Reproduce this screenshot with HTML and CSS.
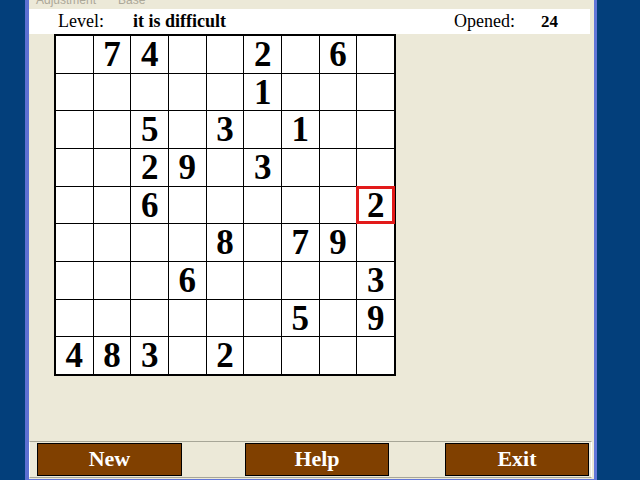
FILE: index.html
```html
<!DOCTYPE html>
<html lang="en">
<head>
    <meta charset="UTF-8">
    <title>Sudoku</title>
    <link rel="stylesheet" href="styles.css">
</head>
<body>
    <div class="window">
        <div class="frame-left"></div>
        <div class="main">
            <div class="menu"><span>Adjustment</span><span>Base</span></div>
            <div class="info">
                <span class="label">Level:</span>
                <span class="level">it is difficult</span>
                <span class="label opened">Opened:</span>
                <span class="count">24</span>
            </div>
            <div class="board">
                <div></div><div>7</div><div>4</div><div></div><div></div><div>2</div><div></div><div>6</div><div></div>
                <div></div><div></div><div></div><div></div><div></div><div>1</div><div></div><div></div><div></div>
                <div></div><div></div><div>5</div><div></div><div>3</div><div></div><div>1</div><div></div><div></div>
                <div></div><div></div><div>2</div><div>9</div><div></div><div>3</div><div></div><div></div><div></div>
                <div></div><div></div><div>6</div><div></div><div></div><div></div><div></div><div></div><div class="active">2</div>
                <div></div><div></div><div></div><div></div><div>8</div><div></div><div>7</div><div>9</div><div></div>
                <div></div><div></div><div></div><div>6</div><div></div><div></div><div></div><div></div><div>3</div>
                <div></div><div></div><div></div><div></div><div></div><div></div><div>5</div><div></div><div>9</div>
                <div>4</div><div>8</div><div>3</div><div></div><div>2</div><div></div><div></div><div></div><div></div>
            </div>
            <div class="buttons">
                <a href="#" class="btn">New</a>
                <a href="#" class="btn btn-help">Help</a>
                <a href="#" class="btn btn-exit">Exit</a>
            </div>
        </div>
        <div class="frame-right"></div>
    </div>
</body>
</html>
```
FILE: styles.css
```css
* {
    margin: 0;
    padding: 0;
    box-sizing: border-box;
}
body {
    width: 640px;
    height: 480px;
    overflow: hidden;
    background-color: #003d7a;
    font-family: "Liberation Serif", serif;
}
.window {
    display: flex;
    height: 480px;
}
.frame-left {
    width: 29px;
    border-left: 25px solid #033f7b;
    background-color: #5d70d2;
}
.frame-right {
    flex: 1;
    border-left: 3px solid #6276d8;
    background-color: #033f7b;
}
.main {
    width: 565px;
    display: flex;
    flex-direction: column;
    background-color: #ece9d8;
    border-bottom: 1px solid #6276d8;
}
.menu {
    height: 9px;
    flex-shrink: 0;
    overflow: hidden;
    display: flex;
    align-items: flex-end;
    padding-left: 7px;
    font-family: "Liberation Sans", sans-serif;
    font-size: 12px;
    color: #aca899;
    line-height: 12px;
}
.menu span {
    margin-bottom: 3px;
    margin-right: 22px;
}
.info {
    width: 561px;
    height: 25px;
    flex-shrink: 0;
    background-color: #fff;
    display: flex;
    align-items: baseline;
    padding-top: 1px;
    line-height: 22px;
}
.info .label {
    font-size: 18px;
    margin-left: 29px;
    width: 75px;
}
.info .opened {
    margin-left: 0;
    width: 87px;
}
.info .level {
    font-size: 18px;
    font-weight: bold;
    width: 321px;
}
.info .count {
    font-size: 17px;
    font-weight: bold;
}
.board {
    margin-left: 25px;
    width: 342px;
    height: 342px;
    flex-shrink: 0;
    display: grid;
    grid-template-columns: repeat(9, minmax(0, 1fr));
    grid-template-rows: repeat(9, minmax(0, 1fr));
    gap: 1px;
    background-color: #000;
    border: 2px solid #000;
}
.board > div {
    background-color: #fff;
    font-size: 35px;
    font-weight: bold;
    text-align: center;
    line-height: 38px;
    color: #000;
}
.board > .active {
    outline: 3px solid #e21a1a;
    outline-offset: -2px;
}
.buttons {
    margin-top: auto;
    margin-bottom: 1px;
    width: 563px;
    height: 37px;
    flex-shrink: 0;
    display: flex;
    align-items: center;
    padding-left: 7px;
    border-top: 1px solid #a7a697;
    border-left: 1px solid #fff;
    border-bottom: 1px solid #a7a697;
    border-right: 1px solid #fff;
}
.btn {
    width: 145px;
    height: 33px;
    background-color: #804000;
    border: 1px solid #000;
    color: #fff;
    text-decoration: none;
    font-size: 22px;
    font-weight: bold;
    text-align: center;
    line-height: 29px;
}
.btn-help {
    margin-left: 63px;
    width: 144px;
}
.btn-exit {
    margin-left: 56px;
    width: 144px;
}
```
